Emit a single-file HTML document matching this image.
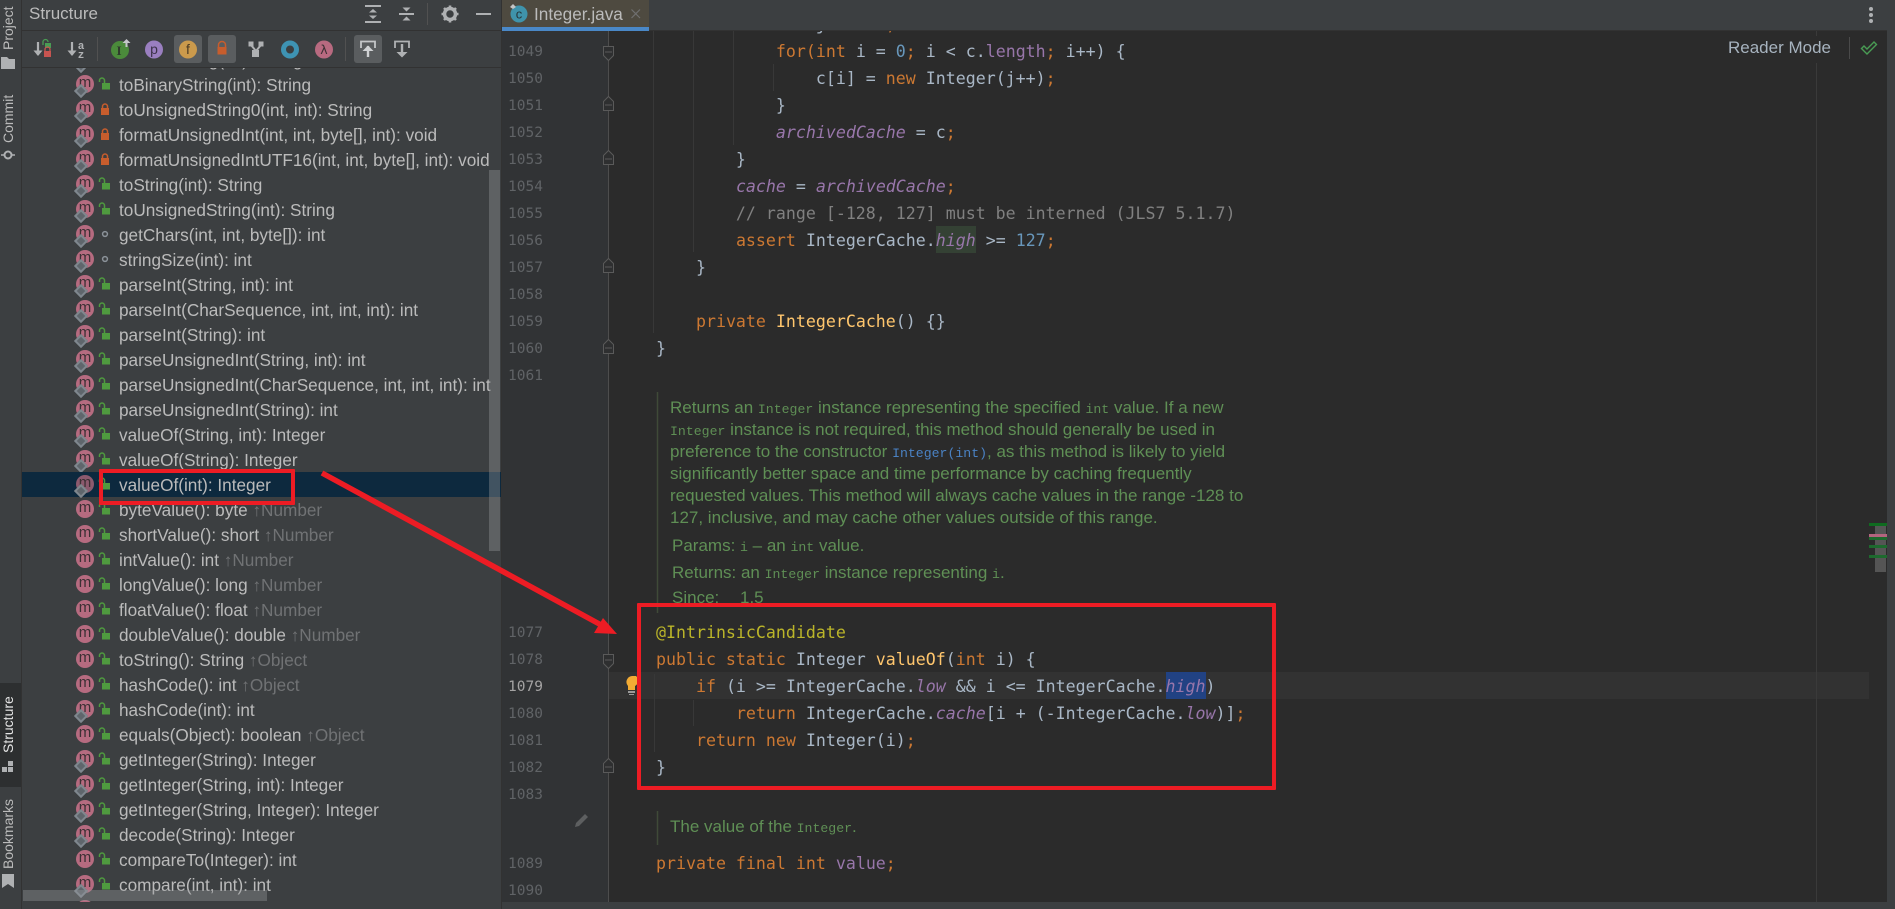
<!DOCTYPE html>
<html><head><meta charset="utf-8"><title>Integer.java</title>
<style>
html,body{margin:0;padding:0;width:1895px;height:909px;overflow:hidden;background:#2b2b2b}
*{box-sizing:border-box}
body{position:relative;font-family:"Liberation Sans",sans-serif}
.a{position:absolute}
#stripe{left:0;top:0;width:22px;height:909px;background:#3c3f41;border-right:1px solid #323232}
.v{position:absolute;writing-mode:vertical-rl;transform:rotate(180deg);font-size:14px;line-height:16px;left:0;width:16px;color:#bbb;white-space:nowrap;text-align:center}
#panel{left:22px;top:0;width:480px;height:909px;background:#3c3f41;border-right:1px solid #323232}
#list{left:22px;top:68px;width:479px;height:834px;overflow:hidden;font-size:17.2px;color:#bbb}
#rows{position:absolute;left:0;top:-21px;width:479px}
.r{position:relative;height:25px;line-height:26px;white-space:nowrap;padding-left:97px}
.r.sel{background:#0d293e}
.m{position:absolute;left:54px;top:3px;width:18px;height:18px;border-radius:50%;background:#b66b80;color:#3c3034;font:normal 15px/16px "Liberation Sans",sans-serif;text-align:center}
.s:after{content:"";position:absolute;left:0;top:11px;width:6px;height:6px;background:#5f666c;border:2px solid #7f878e;transform:rotate(45deg)}
.r svg{position:absolute;left:76px;top:5px;width:14px;height:14px}
.h{color:#707274}
#code{left:0;top:0;width:1895px;height:909px;overflow:hidden}
.c{position:absolute;left:656px;height:27px;line-height:27px;white-space:pre;font-family:"DejaVu Sans Mono","Liberation Mono",monospace;font-size:16.6px;color:#a9b7c6}
.k{color:#cc7832}.f{color:#9876aa;font-style:italic}.p{color:#9876aa}.n{color:#6897bb}.g{color:#808080}.t{color:#ffc66d}.an{color:#bbb529}
.ln{position:absolute;left:508px;height:27px;line-height:27px;font-family:"DejaVu Sans Mono","Liberation Mono",monospace;font-size:14.5px;color:#606366}
.d{position:absolute;left:670px;height:22px;line-height:22px;white-space:pre;font-size:17px;color:#5f8f55}
.d code{font-family:"Liberation Mono",monospace;font-size:13.2px}
.d .lk{color:#4a82c4}
</style></head><body>

<div id="code" class="a">
<div class="a" style="left:502px;top:0;width:106px;height:909px;background:#313335"></div>
<div class="a" style="left:608px;top:672px;width:1261px;height:27px;background:#323232"></div>
<div class="a" style="left:936px;top:226px;width:40px;height:27px;background:#344134"></div>
<div class="a" style="left:1166px;top:672px;width:40px;height:27px;background:#214283"></div>

<svg class="a" style="left:0;top:0" width="1895" height="909" fill="none">
<path d="M608.500 31V902" stroke="#4d4d4d"/>
<path d="M653.500 31V333M693.500 31V252M733.500 31V145M773.500 64V91M654.500 674V752M693.500 700V726" stroke="#383838"/>
<path d="M1816.500 31V36M1816.500 63V902" stroke="#3a3a3a"/>
<g fill="#2e2f30" stroke="#5a5a5a">
<path d="M603.500 46.500H613.500V55.500L608.500 60.500 603.500 55.500Z"/>
<path d="M603.500 110.500H613.500V101.500L608.500 96.500 603.500 101.500Z"/>
<path d="M603.500 164.500H613.500V155.500L608.500 150.500 603.500 155.500Z"/>
<path d="M603.500 272.500H613.500V263.500L608.500 258.500 603.500 263.500Z"/>
<path d="M603.500 353.500H613.500V344.500L608.500 339.500 603.500 344.500Z"/>
<path d="M603.500 654.500H613.500V663.500L608.500 668.500 603.500 663.500Z"/>
<path d="M603.500 772.500H613.500V763.500L608.500 758.500 603.500 763.500Z"/>
<path d="M605 52H612M605 105H612M605 159H612M605 267H612M605 348H612M605 660H612M605 767H612" stroke-width="1"/>
</g>
<path d="M657.500 392V613M657.500 811V845" stroke="#3f4a38" stroke-width="1.500"/>
<path d="M632 676a6 6 0 0 0-4 10v4h7v-4a6 6 0 0 0 1-10z" fill="#f2ab34"/>
<path d="M628 691h7v2h-7zM629 694h5v1h-5z" fill="#9a9a9a"/>
<path d="M575 827l1-4 9-9 3 3-9 9z" fill="#5d5f60"/>
<rect x="1875" y="526" width="11" height="46" fill="#555"/>
<rect x="1869" y="523" width="18" height="3" fill="#0f6b20"/>
<rect x="1869" y="534" width="18" height="3" fill="#b4647f"/>
<rect x="1869" y="537" width="18" height="3" fill="#1d6a2e"/>
<rect x="1869" y="545" width="18" height="3" fill="#1d6a2e"/>
<rect x="1869" y="555" width="18" height="3" fill="#1d6a2e"/>
</svg>

<div class="c" style="top:11px">            <span class="k">int</span> j = <span class="f">low</span><span class="k">;</span></div>
<div class="c" style="top:38px">            <span class="k">for(int</span> i = <span class="n">0</span><span class="k">;</span> i &lt; c.<span class="p">length</span><span class="k">;</span> i++) {</div>
<div class="c" style="top:65px">                c[i] = <span class="k">new</span> Integer(j++)<span class="k">;</span></div>
<div class="c" style="top:92px">            }</div>
<div class="c" style="top:119px">            <span class="f">archivedCache</span> = c<span class="k">;</span></div>
<div class="c" style="top:146px">        }</div>
<div class="c" style="top:173px">        <span class="f">cache</span> = <span class="f">archivedCache</span><span class="k">;</span></div>
<div class="c g" style="top:200px">        // range [-128, 127] must be interned (JLS7 5.1.7)</div>
<div class="c" style="top:227px">        <span class="k">assert</span> IntegerCache.<span class="f">high</span> &gt;= <span class="n">127</span><span class="k">;</span></div>
<div class="c" style="top:254px">    }</div>
<div class="c" style="top:308px">    <span class="k">private</span> <span class="t">IntegerCache</span>() {}</div>
<div class="c" style="top:335px">}</div>
<div class="c an" style="top:619px">@IntrinsicCandidate</div>
<div class="c" style="top:646px"><span class="k">public static</span> Integer <span class="t">valueOf</span>(<span class="k">int</span> i) {</div>
<div class="c" style="top:673px">    <span class="k">if</span> (i &gt;= IntegerCache.<span class="f">low</span> &amp;&amp; i &lt;= IntegerCache.<span class="f">high</span>)</div>
<div class="c" style="top:700px">        <span class="k">return</span> IntegerCache.<span class="f">cache</span>[i + (-IntegerCache.<span class="f">low</span>)]<span class="k">;</span></div>
<div class="c" style="top:727px">    <span class="k">return new</span> Integer(i)<span class="k">;</span></div>
<div class="c" style="top:754px">}</div>
<div class="c" style="top:850px"><span class="k">private final int</span> <span class="p">value</span><span class="k">;</span></div>

<div class="ln" style="top:39px">1049</div><div class="ln" style="top:66px">1050</div><div class="ln" style="top:93px">1051</div><div class="ln" style="top:120px">1052</div><div class="ln" style="top:147px">1053</div><div class="ln" style="top:174px">1054</div><div class="ln" style="top:201px">1055</div><div class="ln" style="top:228px">1056</div><div class="ln" style="top:255px">1057</div><div class="ln" style="top:282px">1058</div><div class="ln" style="top:309px">1059</div><div class="ln" style="top:336px">1060</div><div class="ln" style="top:363px">1061</div>
<div class="ln" style="top:620px">1077</div><div class="ln" style="top:647px">1078</div><div class="ln" style="top:674px;color:#a4a3a3">1079</div><div class="ln" style="top:701px">1080</div><div class="ln" style="top:728px">1081</div><div class="ln" style="top:755px">1082</div><div class="ln" style="top:782px">1083</div><div class="ln" style="top:851px">1089</div><div class="ln" style="top:878px">1090</div>

<div class="d" style="top:397px">Returns an <code>Integer</code> instance representing the specified <code>int</code> value. If a new</div>
<div class="d" style="top:419px"><code>Integer</code> instance is not required, this method should generally be used in</div>
<div class="d" style="top:441px">preference to the constructor <code class="lk">Integer(int)</code>, as this method is likely to yield</div>
<div class="d" style="top:463px">significantly better space and time performance by caching frequently</div>
<div class="d" style="top:485px">requested values. This method will always cache values in the range -128 to</div>
<div class="d" style="top:507px">127, inclusive, and may cache other values outside of this range.</div>
<div class="d" style="top:535px;left:672px">Params:</div><div class="d" style="top:535px;left:740px"><code>i</code> – an <code>int</code> value.</div>
<div class="d" style="top:562px;left:672px">Returns: an <code>Integer</code> instance representing <code>i</code>.</div>
<div class="d" style="top:587px;left:672px">Since:</div><div class="d" style="top:587px;left:740px">1.5</div>
<div class="d" style="top:816px">The value of the <code>Integer</code>.</div>
</div>

<div class="a" style="left:502px;top:0;width:1385px;height:31px;background:#3c3f41;border-bottom:1px solid #323232"></div>
<div class="a" style="left:502px;top:0;width:147px;height:27px;background:#4e4a40"></div>
<div class="a" style="left:502px;top:27px;width:147px;height:4px;background:#4a88c7"></div>
<svg class="a" style="left:505px;top:0" width="30" height="28">
<circle cx="14" cy="14" r="8.500" fill="#3f93ab"/><text x="14" y="18.500" font-family="Liberation Sans" font-size="13" fill="#27353a" text-anchor="middle">c</text>
<path d="M5 7l3-3 3 3-3 2z" fill="#c4c4c4"/>
</svg>
<div class="a" style="left:534px;top:0;height:27px;line-height:28px;font-size:17.2px;color:#bbb">Integer.java</div>
<svg class="a" style="left:630px;top:8px" width="12" height="12"><path d="M1.500 1.500l8.500 8.500M10 1.500L1.500 10" stroke="#6f6f6f" stroke-width="1.200"/></svg>
<svg class="a" style="left:1866px;top:6px" width="10" height="18"><circle cx="5" cy="3" r="2" fill="#afb1b3"/><circle cx="5" cy="9" r="2" fill="#afb1b3"/><circle cx="5" cy="15" r="2" fill="#afb1b3"/></svg>
<div class="a" style="left:1728px;top:36px;height:24px;line-height:24px;font-size:17px;color:#a7b3bf;background:#2b2b2b;white-space:nowrap">Reader Mode</div>
<div class="a" style="left:1849px;top:37px;width:1px;height:22px;background:#4a4a4a"></div>
<svg class="a" style="left:1860px;top:41px" width="18" height="15" fill="none"><path d="M1.500 7.500l5.500 5.500 9.500-9.500-2.500-2.500-7 7-3-3z" stroke="#499c54" stroke-width="1.400"/></svg>
<div class="a" style="left:1887px;top:0;width:8px;height:909px;background:#3c3f41"></div>
<div class="a" style="left:502px;top:902px;width:1393px;height:7px;background:#3c3f41"></div>

<div id="panel" class="a"></div>
<div class="a" style="left:22px;top:30px;width:479px;height:1px;background:#323232"></div>
<div class="a" style="left:22px;top:67px;width:479px;height:1px;background:#323232"></div>
<div class="a" style="left:29px;top:0;height:28px;line-height:27px;font-size:17px;color:#bbb">Structure</div>

<svg class="a" style="left:0;top:0" width="502" height="68" fill="none">
<path d="M365 6h16M365 22h16" stroke="#afb1b3" stroke-width="2"/><path d="M373 9l-4 3.500h8zM373 19l-4-3.500h8z" fill="#afb1b3"/>
<path d="M399 14h15" stroke="#afb1b3" stroke-width="2"/><path d="M406.500 11.500l-4-4h8zM406.500 16.500l-4 4h8z" fill="#afb1b3"/>
<path d="M427.500 3V25" stroke="#515151"/>
<circle cx="450" cy="14" r="5.500" stroke="#afb1b3" stroke-width="3.500"/><path d="M450 5.500v3M450 19.500v3M441.500 14h3M455.500 14h3M444 8l2 2M454 18l2 2M456 8l-2 2M446 18l-2 2" stroke="#afb1b3" stroke-width="2.600"/>
<path d="M476 14h15" stroke="#afb1b3" stroke-width="2"/>
<rect x="174" y="35" width="28" height="28" rx="3" fill="#5a5d5f"/>
<rect x="208" y="35" width="28" height="28" rx="3" fill="#5a5d5f"/>
<rect x="354" y="35" width="28" height="28" rx="3" fill="#5a5d5f"/>
<path d="M97.500 37V61M345.500 37V61" stroke="#515151"/>
<path d="M38 42V55" stroke="#afb1b3" stroke-width="2.200"/><path d="M33.500 50.500h9L38 56z" fill="#afb1b3"/>
<path d="M43 45v-3a2.500 2.500 0 0 1 5 0" stroke="#499c54" stroke-width="1.300"/><rect x="45" y="43" width="6" height="5" fill="#499c54"/>
<path d="M45 51v-1.500a2.500 2.500 0 0 1 5 0V51" stroke="#c75450" stroke-width="1.300"/><rect x="44" y="51" width="7" height="6" fill="#c75450"/>
<path d="M72 42V55" stroke="#afb1b3" stroke-width="2.200"/><path d="M67.500 50.500h9L72 56z" fill="#afb1b3"/>
<text x="81" y="49" font-family="Liberation Mono" font-weight="bold" font-size="11" fill="#afb1b3" text-anchor="middle">a</text>
<text x="81" y="58" font-family="Liberation Mono" font-weight="bold" font-size="11" fill="#afb1b3" text-anchor="middle">z</text>
<circle cx="120" cy="50" r="9" fill="#4b8b3b"/>
<text x="119" y="55" font-family="Liberation Serif" font-weight="bold" font-size="13" fill="#2f3b2d" text-anchor="middle">I</text>
<path d="M126.500 47V41" stroke="#c4c6c8" stroke-width="2"/><path d="M122.500 43l4-4 4 4z" fill="#c4c6c8"/>
<circle cx="154" cy="49.500" r="9" fill="#9a7fc0"/>
<text x="154" y="54" font-family="Liberation Sans" font-size="14" fill="#3c3248" text-anchor="middle">p</text>
<circle cx="188" cy="49.500" r="9" fill="#cb9a4c"/>
<text x="188" y="54" font-family="Liberation Sans" font-size="14" fill="#4a3a24" text-anchor="middle">f</text>
<path d="M218.500 47v-2a3.500 3.500 0 0 1 7 0v2" stroke="#c75d2d" stroke-width="1.500"/><rect x="217.500" y="47" width="9" height="7.500" fill="#c75d2d"/>
<rect x="248.500" y="41.500" width="5" height="5" fill="#afb1b3"/><rect x="258.500" y="41.500" width="5" height="5" fill="#afb1b3"/><rect x="252" y="50" width="7" height="7" fill="#afb1b3"/>
<path d="M251 45l5 6M261 45l-5 6" stroke="#afb1b3" stroke-width="2"/>
<circle cx="290" cy="49.500" r="6.500" stroke="#3e93b3" stroke-width="5"/>
<circle cx="324" cy="49.500" r="9" fill="#b86a80"/>
<text x="324" y="54" font-family="DejaVu Sans" font-size="12.500" fill="#3c3034" text-anchor="middle">λ</text>
<path d="M361 48v-6.500h14V48" stroke="#c4c6c8" stroke-width="1.800"/><path d="M368 46V57" stroke="#d0d2d4" stroke-width="2.400"/><path d="M362.500 51l5.500-5.500 5.500 5.500z" fill="#d0d2d4"/>
<path d="M395 48v-6.500h14V48" stroke="#afb1b3" stroke-width="1.800"/><path d="M402 44V54" stroke="#afb1b3" stroke-width="2.400"/><path d="M396.500 52l5.500 5.500 5.500-5.500z" fill="#afb1b3"/>
</svg>

<svg width="0" height="0" style="position:absolute"><defs>
<symbol id="L" viewBox="0 0 14 14" fill="none"><path d="M1.500 5V3.500a2.500 2.500 0 0 1 5 0V7" stroke="#4f9a3f" stroke-width="1.500"/><rect x="4" y="6" width="8" height="6.500" fill="#4f9a3f"/></symbol>
<symbol id="O" viewBox="0 0 14 14" fill="none"><path d="M4.500 6.500V4.500a2.500 2.500 0 0 1 5 0v2" stroke="#c75d2d" stroke-width="1.500"/><rect x="3" y="6" width="8" height="7" fill="#c75d2d"/></symbol>
<symbol id="D" viewBox="0 0 14 14" fill="none"><circle cx="7" cy="7" r="2.400" stroke="#8b9299" stroke-width="1.500"/></symbol>
</defs></svg>

<div id="list" class="a"><div id="rows">
<div class="r"><i class="m s">m</i><svg><use href="#L"/></svg>toOctalString(int): String</div>
<div class="r"><i class="m s">m</i><svg><use href="#L"/></svg>toBinaryString(int): String</div>
<div class="r"><i class="m s">m</i><svg><use href="#O"/></svg>toUnsignedString0(int, int): String</div>
<div class="r"><i class="m s">m</i><svg><use href="#O"/></svg>formatUnsignedInt(int, int, byte[], int): void</div>
<div class="r"><i class="m s">m</i><svg><use href="#O"/></svg>formatUnsignedIntUTF16(int, int, byte[], int): void</div>
<div class="r"><i class="m s">m</i><svg><use href="#L"/></svg>toString(int): String</div>
<div class="r"><i class="m s">m</i><svg><use href="#L"/></svg>toUnsignedString(int): String</div>
<div class="r"><i class="m s">m</i><svg><use href="#D"/></svg>getChars(int, int, byte[]): int</div>
<div class="r"><i class="m s">m</i><svg><use href="#D"/></svg>stringSize(int): int</div>
<div class="r"><i class="m s">m</i><svg><use href="#L"/></svg>parseInt(String, int): int</div>
<div class="r"><i class="m s">m</i><svg><use href="#L"/></svg>parseInt(CharSequence, int, int, int): int</div>
<div class="r"><i class="m s">m</i><svg><use href="#L"/></svg>parseInt(String): int</div>
<div class="r"><i class="m s">m</i><svg><use href="#L"/></svg>parseUnsignedInt(String, int): int</div>
<div class="r"><i class="m s">m</i><svg><use href="#L"/></svg>parseUnsignedInt(CharSequence, int, int, int): int</div>
<div class="r"><i class="m s">m</i><svg><use href="#L"/></svg>parseUnsignedInt(String): int</div>
<div class="r"><i class="m s">m</i><svg><use href="#L"/></svg>valueOf(String, int): Integer</div>
<div class="r"><i class="m s">m</i><svg><use href="#L"/></svg>valueOf(String): Integer</div>
<div class="r sel"><i class="m s" style="background:#8c5a6e">m</i><svg><use href="#L"/></svg>valueOf(int): Integer</div>
<div class="r"><i class="m">m</i><svg><use href="#L"/></svg>byteValue(): byte <span class="h">↑Number</span></div>
<div class="r"><i class="m">m</i><svg><use href="#L"/></svg>shortValue(): short <span class="h">↑Number</span></div>
<div class="r"><i class="m">m</i><svg><use href="#L"/></svg>intValue(): int <span class="h">↑Number</span></div>
<div class="r"><i class="m">m</i><svg><use href="#L"/></svg>longValue(): long <span class="h">↑Number</span></div>
<div class="r"><i class="m">m</i><svg><use href="#L"/></svg>floatValue(): float <span class="h">↑Number</span></div>
<div class="r"><i class="m">m</i><svg><use href="#L"/></svg>doubleValue(): double <span class="h">↑Number</span></div>
<div class="r"><i class="m">m</i><svg><use href="#L"/></svg>toString(): String <span class="h">↑Object</span></div>
<div class="r"><i class="m">m</i><svg><use href="#L"/></svg>hashCode(): int <span class="h">↑Object</span></div>
<div class="r"><i class="m s">m</i><svg><use href="#L"/></svg>hashCode(int): int</div>
<div class="r"><i class="m">m</i><svg><use href="#L"/></svg>equals(Object): boolean <span class="h">↑Object</span></div>
<div class="r"><i class="m s">m</i><svg><use href="#L"/></svg>getInteger(String): Integer</div>
<div class="r"><i class="m s">m</i><svg><use href="#L"/></svg>getInteger(String, int): Integer</div>
<div class="r"><i class="m s">m</i><svg><use href="#L"/></svg>getInteger(String, Integer): Integer</div>
<div class="r"><i class="m s">m</i><svg><use href="#L"/></svg>decode(String): Integer</div>
<div class="r"><i class="m">m</i><svg><use href="#L"/></svg>compareTo(Integer): int</div>
<div class="r"><i class="m s">m</i><svg><use href="#L"/></svg>compare(int, int): int</div>
<div class="r"><i class="m">m</i></div>
</div>
<div class="a" style="left:467px;top:102px;width:11px;height:381px;background:rgba(150,152,154,.38)"></div>
<div class="a" style="left:1px;top:822px;width:244px;height:11px;background:rgba(150,152,154,.38)"></div>
</div>

<div id="stripe" class="a"></div>
<div class="v" style="top:7px;height:43px">Project</div>
<div class="v" style="top:95px;height:48px">Commit</div>
<div class="a" style="left:0;top:683px;width:21px;height:104px;background:#2d2f30"></div>
<div class="v" style="top:697px;height:56px;color:#e6e6e6">Structure</div>
<div class="v" style="top:802px;height:67px">Bookmarks</div>
<svg class="a" style="left:0;top:0" width="22" height="909" fill="none">
<path d="M1 57h6l2 2h6v10H1z" fill="#afb1b3"/>
<circle cx="8" cy="155" r="3.500" stroke="#afb1b3" stroke-width="2"/><path d="M1 155h3M12 155h3" stroke="#afb1b3" stroke-width="1.500"/>
<path d="M8 761h5v5H8zM2 767h5v5H2zM8 767h5v5H8z" fill="#afb1b3"/>
<path d="M2 874h12v14l-6-4-6 4z" fill="#afb1b3"/>
</svg>

<div class="a" style="left:99px;top:469px;width:196px;height:36px;border:4px solid #ed1c24;border-radius:1px"></div>
<div class="a" style="left:637px;top:603px;width:639px;height:187px;border:4px solid #ed1c24;border-radius:1px"></div>
<svg class="a" style="left:0;top:0;pointer-events:none" width="1895" height="909">
<path d="M322 473L603 626" stroke="#ed1c24" stroke-width="5.500"/>
<path d="M617 634L594 633 603 618Z" fill="#ed1c24"/>
</svg>
</body></html>
